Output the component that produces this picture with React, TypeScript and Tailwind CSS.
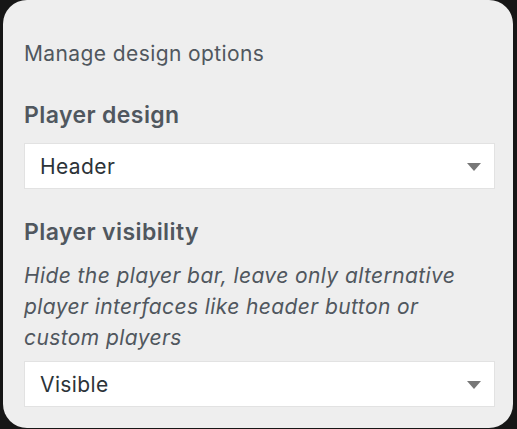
export default function App() {
  const font = { fontFamily: "Inter, 'Noto Sans', sans-serif" };

  return (
    <div className="h-[429px] w-[517px] bg-[#161616] pl-[3px]" style={font}>
      <div className="h-[428px] w-[510px] rounded-[24px] bg-[#eeeeee] px-[21px] pt-[40px] tracking-[0.4px]">
        <p className="text-[21px] leading-[28px] text-[#50575e]">Manage design options</p>

        <h2 className="mt-[32px] text-[23px] font-semibold leading-[30px] text-[#50575e]">
          Player design
        </h2>
        <Select value="Header" className="mt-[13px]" />

        <h2 className="mt-[28px] text-[23px] font-semibold leading-[30px] text-[#50575e]">
          Player visibility
        </h2>
        <p className="mt-[13px] text-[21px] italic leading-[31px] text-[#50575e]">
          Hide the player bar, leave only alternative
          <br />
          player interfaces like header button or
          <br />
          custom players
        </p>
        <Select value="Visible" className="mt-[8px]" />
      </div>
    </div>
  );
}

function Select({ value, className }: { value: string; className?: string }) {
  return (
    <div
      className={`flex h-[46px] w-[471px] items-center justify-between border border-[#e2e2e2] bg-white pl-[15px] pr-[13px] pt-[2px] ${className ?? ""}`}
    >
      <span className="text-[21px] text-[#2c3338]">{value}</span>
      <svg width="14" height="8" viewBox="0 0 14 8">
        <path d="M0 0 L14 0 L7 8 Z" fill="#777777" />
      </svg>
    </div>
  );
}
